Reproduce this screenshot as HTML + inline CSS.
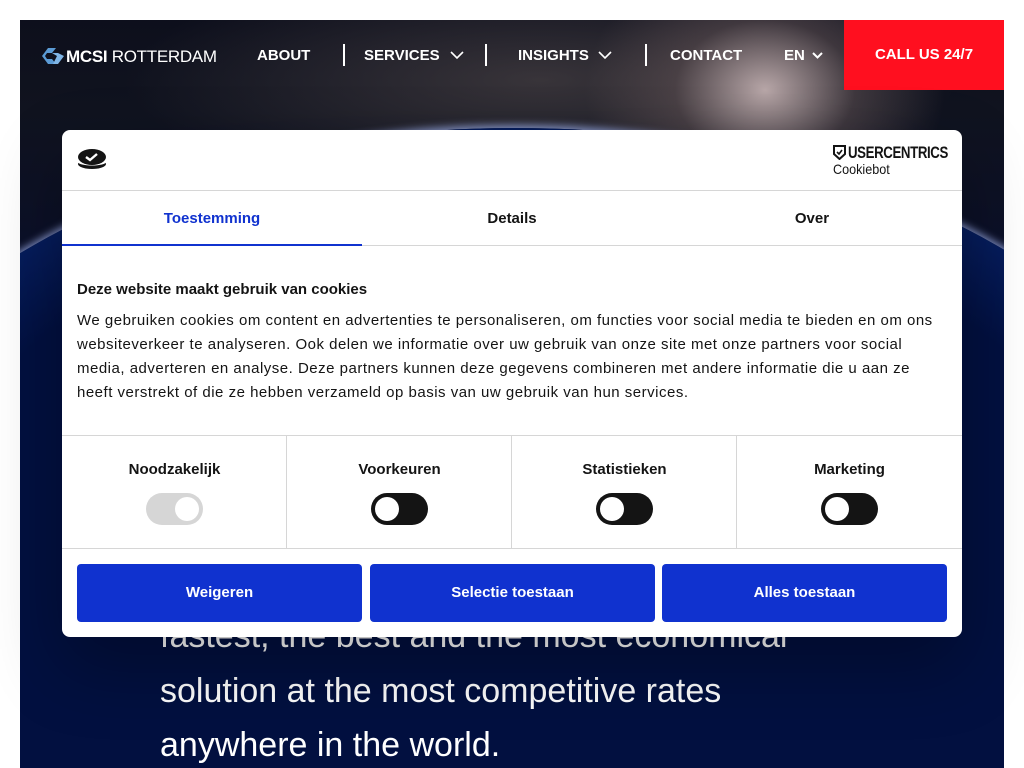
<!DOCTYPE html>
<html><head><meta charset="utf-8"><style>
*{margin:0;padding:0;box-sizing:border-box}
html,body{width:1024px;height:768px;overflow:hidden}
body{background:#fff;position:relative;font-family:"Liberation Sans",Arial,sans-serif}
.hero{position:absolute;left:20px;top:20px;width:984px;height:748px;overflow:hidden;
background:
radial-gradient(ellipse 180px 140px at 745px 70px,rgba(210,190,190,.85),rgba(120,100,100,.4) 50%,transparent 100%),
radial-gradient(ellipse 520px 140px at 520px 60px,rgba(90,80,80,.55),transparent 80%),
linear-gradient(180deg,#0d0f1c 0px,#10131f 90px,#0a0f2a 250px,#03103f 450px,#020d40 748px);}
.arc{position:absolute;left:-220px;top:108px;width:1430px;height:900px;border-radius:50%;
background:radial-gradient(ellipse at 50% 50%,#021040 60%,#0a2c80 85%,#2a56b0 95%,#b8c4ec 99%,transparent 100%);
box-shadow:0 -3px 8px rgba(170,190,255,.7)}
.nav{position:absolute;top:0;left:0;width:984px;height:70px;color:#fff;font-size:15px;font-weight:600}
.nav span{position:absolute;top:27px}
.sep{position:absolute;top:24px;width:2px;height:22px;background:#fff}
.call{position:absolute;left:824px;top:0;width:160px;height:70px;background:#ff0f1f;color:#fff;text-align:center;line-height:70px;font-size:15px;font-weight:600}
.big{position:absolute;left:140px;color:#fff;font-size:34px;letter-spacing:0;white-space:nowrap}
.dlg{position:absolute;left:62px;top:130px;width:900px;height:507px;background:#fff;border-radius:8px;box-shadow:0 30px 70px rgba(0,0,0,.3);color:#141414}
.hl{position:absolute;left:0;width:900px;height:1px;background:#d6d6d6}
.tab{position:absolute;top:80px;width:300px;text-align:center;font-weight:700;font-size:15px}
.p{position:absolute;left:15px;top:179px;font-size:15px;line-height:24px;white-space:nowrap;letter-spacing:.5px}
.lab{position:absolute;top:331px;width:225px;text-align:center;font-weight:700;font-size:15px}
.vl{position:absolute;top:306px;width:1px;height:112px;background:#d6d6d6}
.tg{position:absolute;top:363px;width:57px;height:32px;border-radius:16px;background:#141414}
.tg:after{content:"";position:absolute;left:4px;top:4px;width:24px;height:24px;border-radius:50%;background:#fff}
.tg.dis{background:#d6d6d6}.tg.dis:after{left:29px}
.btn{position:absolute;top:434px;width:285px;height:58px;background:#1032cf;color:#fff;border-radius:4px;text-align:center;line-height:58px;font-weight:700;font-size:15px}
</style></head><body>
<div class="hero">
<div class="arc"></div>
<div class="big" style="top:597px">fastest, the best and the most economical</div>
<div class="big" style="top:652px">solution at the most competitive rates</div>
<div class="big" style="top:706px">anywhere in the world.</div>
<div class="nav">
<svg style="position:absolute;left:20px;top:28px" width="24" height="16" viewBox="0 0 24 16"><path d="M8 0h8l-4 5H7L5 8l2 3h5l4 5H8L2 8z" fill="#5b9bd5"/><path d="M12 5h6l6 3-6 8h-5l4-8z" fill="#7fb5e6"/></svg>
<span style="left:46px;font-size:17px;letter-spacing:-.3px"><b>MCSI</b> <span style="position:static;font-weight:400">ROTTERDAM</span></span>
<span style="left:237px">ABOUT</span>
<div class="sep" style="left:323px"></div>
<span style="left:344px">SERVICES</span>
<svg style="position:absolute;left:430px;top:31px" width="14" height="9"><path d="M1 1l6 6 6-6" stroke="#fff" stroke-width="1.6" fill="none"/></svg>
<div class="sep" style="left:465px"></div>
<span style="left:498px">INSIGHTS</span>
<svg style="position:absolute;left:578px;top:31px" width="14" height="9"><path d="M1 1l6 6 6-6" stroke="#fff" stroke-width="1.6" fill="none"/></svg>
<div class="sep" style="left:625px"></div>
<span style="left:650px">CONTACT</span>
<span style="left:764px">EN</span>
<svg style="position:absolute;left:792px;top:32px" width="11" height="8"><path d="M1 1l4.5 4.5L10 1" stroke="#fff" stroke-width="2" fill="none"/></svg>
<div class="call">CALL US 24/7</div>
</div>
</div>
<div class="dlg">
<svg style="position:absolute;left:15px;top:17px" width="30" height="24" viewBox="0 0 30 24"><ellipse cx="15" cy="17" rx="14" ry="5" fill="#141414"/><ellipse cx="15" cy="15" rx="14" ry="3.5" fill="#fff"/><ellipse cx="15" cy="10" rx="14" ry="8" fill="#141414"/><path d="M9 10l4 3 7-6" stroke="#fff" stroke-width="2.4" fill="none"/></svg>
<svg style="position:absolute;left:771px;top:15px" width="13" height="15" viewBox="0 0 13 15"><path d="M1 1h11v8l-5.5 5L1 9z" fill="none" stroke="#141414" stroke-width="2"/><path d="M4 7l2 2 3-4" stroke="#141414" stroke-width="1.6" fill="none"/></svg>
<div style="position:absolute;left:786px;top:13px;font-weight:700;font-size:17px;letter-spacing:-.5px;transform:scaleX(.78);transform-origin:left;white-space:nowrap">USERCENTRICS</div>
<div style="position:absolute;left:771px;top:31px;font-size:14px;transform:scaleX(.9);transform-origin:left">Cookiebot</div>
<div class="hl" style="top:60px"></div>
<div class="tab" style="left:0;color:#1032cf">Toestemming</div>
<div class="tab" style="left:300px">Details</div>
<div class="tab" style="left:600px">Over</div>
<div class="hl" style="top:115px"></div>
<div style="position:absolute;left:0;top:114px;width:300px;height:2px;background:#1032cf"></div>
<div style="position:absolute;left:15px;top:151px;font-weight:700;font-size:15px">Deze website maakt gebruik van cookies</div>
<div class="p">We gebruiken cookies om content en advertenties te personaliseren, om functies voor social media te bieden en om ons<br>websiteverkeer te analyseren. Ook delen we informatie over uw gebruik van onze site met onze partners voor social<br>media, adverteren en analyse. Deze partners kunnen deze gegevens combineren met andere informatie die u aan ze<br>heeft verstrekt of die ze hebben verzameld op basis van uw gebruik van hun services.</div>
<div class="hl" style="top:305px"></div>
<div class="lab" style="left:0">Noodzakelijk</div>
<div class="lab" style="left:225px">Voorkeuren</div>
<div class="lab" style="left:450px">Statistieken</div>
<div class="lab" style="left:675px">Marketing</div>
<div class="vl" style="left:224px"></div><div class="vl" style="left:449px"></div><div class="vl" style="left:674px"></div>
<div class="tg dis" style="left:84px"></div>
<div class="tg" style="left:309px"></div>
<div class="tg" style="left:534px"></div>
<div class="tg" style="left:759px"></div>
<div class="hl" style="top:418px"></div>
<div class="btn" style="left:15px">Weigeren</div>
<div class="btn" style="left:308px">Selectie toestaan</div>
<div class="btn" style="left:600px">Alles toestaan</div>
</div>
</body></html>
